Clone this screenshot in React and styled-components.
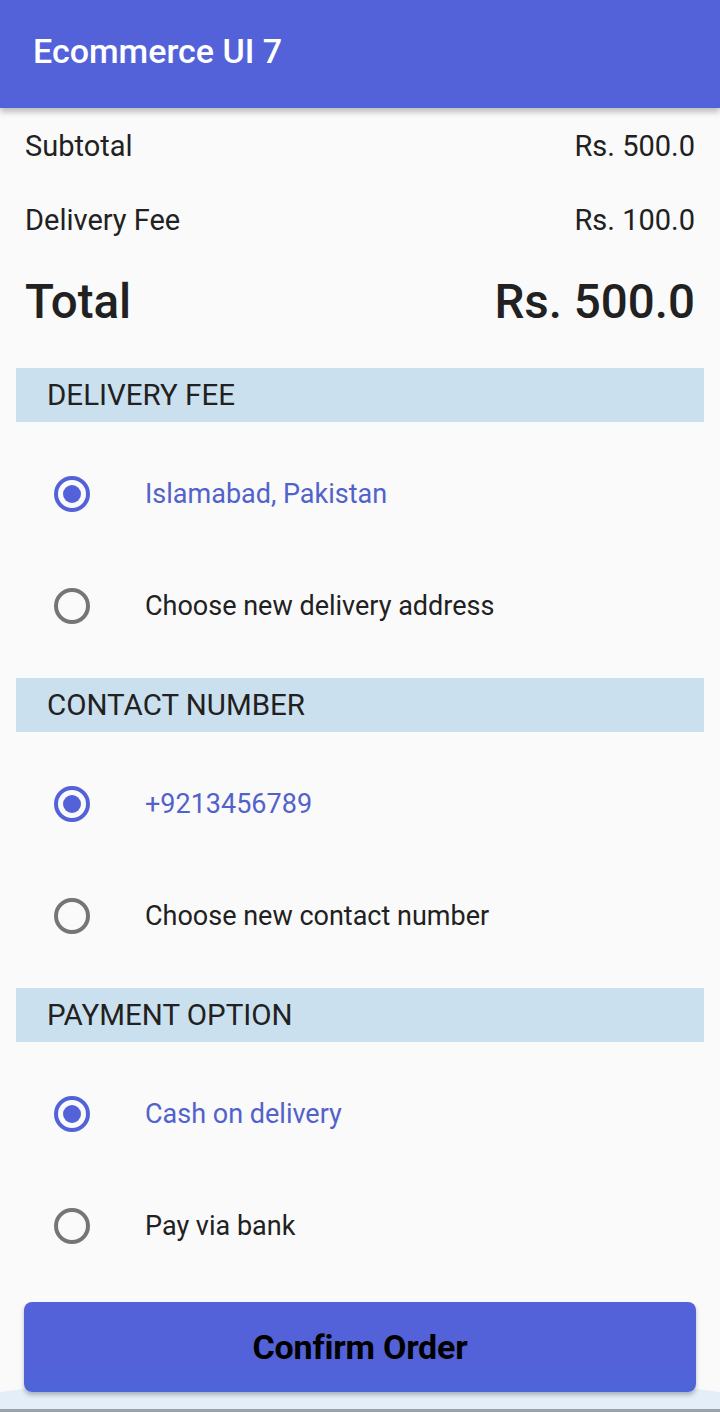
import styled, { createGlobalStyle } from 'styled-components';

const GlobalStyle = createGlobalStyle`
    html, body {
        margin: 0;
        padding: 0;
        background: #fafafa;
        font-family: Roboto, "Noto Sans", sans-serif;
    }
`

const Page = styled.div`
    width: 720px;
    height: 1412px;
    display: flex;
    flex-direction: column;
    overflow: hidden;
    background: #fafafa;
`

const AppBar = styled.header`
    height: 108px;
    flex-shrink: 0;
    display: flex;
    align-items: center;
    padding-left: 33px;
    background: #5362d9;
    box-shadow: 0 4px 6px rgba(0, 0, 0, 0.25);
    position: relative;
    z-index: 1;
`

const AppTitle = styled.h1`
    margin: 0 0 6px;
    font-size: 34px;
    font-weight: 500;
    color: #fff;
`

const Summary = styled.section`
    display: flex;
    flex-direction: column;
    padding: 1px 25px 0 25px;
`

const SummaryRow = styled.div`
    display: flex;
    justify-content: space-between;
    align-items: center;
    height: ${(p) => (p.$big ? '90px' : '74px')};
    font-size: ${(p) => (p.$big ? '47.5px' : '29px')};
    font-weight: ${(p) => (p.$big ? 500 : 400)};
    color: #212121;
`

const Options = styled.div`
    display: flex;
    flex-direction: column;
    gap: 16px;
    padding: 21px 16px 0;
`

const Section = styled.section`
    display: flex;
    flex-direction: column;
`

const SectionHeader = styled.div`
    height: 54px;
    display: flex;
    align-items: center;
    padding-left: 31px;
    background: #cbe0ee;
    font-size: 29.5px;
    color: #212121;
    margin-bottom: 16px;
`

const OptionRow = styled.label`
    height: 112px;
    display: flex;
    align-items: center;
    gap: 55px;
    padding-left: 38px;
    font-size: 27px;
    color: ${(p) => (p.$selected ? '#5262cb' : '#212121')};
`

const Radio = styled.span`
    width: 36px;
    height: 36px;
    box-sizing: border-box;
    border-radius: 50%;
    border: 4px solid ${(p) => (p.$selected ? '#5362d9' : '#757575')};
    display: flex;
    align-items: center;
    justify-content: center;

    &::after {
        content: '';
        width: 18px;
        height: 18px;
        border-radius: 50%;
        background: ${(p) => (p.$selected ? '#5362d9' : 'transparent')};
    }
`

const Footer = styled.footer`
    flex: 1;
    position: relative;
    display: flex;
    align-items: flex-start;
    padding: 20px 24px 0;
    overflow: hidden;

    &::before {
        content: '';
        position: absolute;
        left: -240px;
        right: -240px;
        top: 88px;
        height: 220px;
        border-radius: 50%;
        background: #e4eef8;
    }

    &::after {
        content: '';
        position: absolute;
        left: 0;
        right: 0;
        bottom: 0;
        height: 3px;
        background: #9aa3ab;
    }
`

const ConfirmButton = styled.button`
    position: relative;
    z-index: 1;
    width: 100%;
    height: 90px;
    border: none;
    border-radius: 8px;
    background: linear-gradient(to bottom, #5362d9 70%, #4c65d8);
    box-shadow: 0 3px 4px rgba(0, 0, 0, 0.25);
    font-family: Roboto, "Noto Sans", sans-serif;
    font-size: 34px;
    font-weight: 700;
    color: #000;
    letter-spacing: -0.2px;
`

const sections = [
    { title: 'DELIVERY FEE', options: ['Islamabad, Pakistan', 'Choose new delivery address'] },
    { title: 'CONTACT NUMBER', options: ['+9213456789', 'Choose new contact number'] },
    { title: 'PAYMENT OPTION', options: ['Cash on delivery', 'Pay via bank'] },
]

export default function App() {
    return (
        <Page>
            <GlobalStyle />
            <AppBar>
                <AppTitle>Ecommerce UI 7</AppTitle>
            </AppBar>
            <Summary>
                <SummaryRow><span>Subtotal</span><span>Rs. 500.0</span></SummaryRow>
                <SummaryRow><span>Delivery Fee</span><span>Rs. 100.0</span></SummaryRow>
                <SummaryRow $big><span>Total</span><span>Rs. 500.0</span></SummaryRow>
            </Summary>
            <Options>
                {sections.map((s) => (
                    <Section key={s.title}>
                        <SectionHeader>{s.title}</SectionHeader>
                        {s.options.map((o, i) => (
                            <OptionRow key={o} $selected={i === 0}>
                                <Radio $selected={i === 0} />
                                {o}
                            </OptionRow>
                        ))}
                    </Section>
                ))}
            </Options>
            <Footer>
                <ConfirmButton>Confirm Order</ConfirmButton>
            </Footer>
        </Page>
    )
}
